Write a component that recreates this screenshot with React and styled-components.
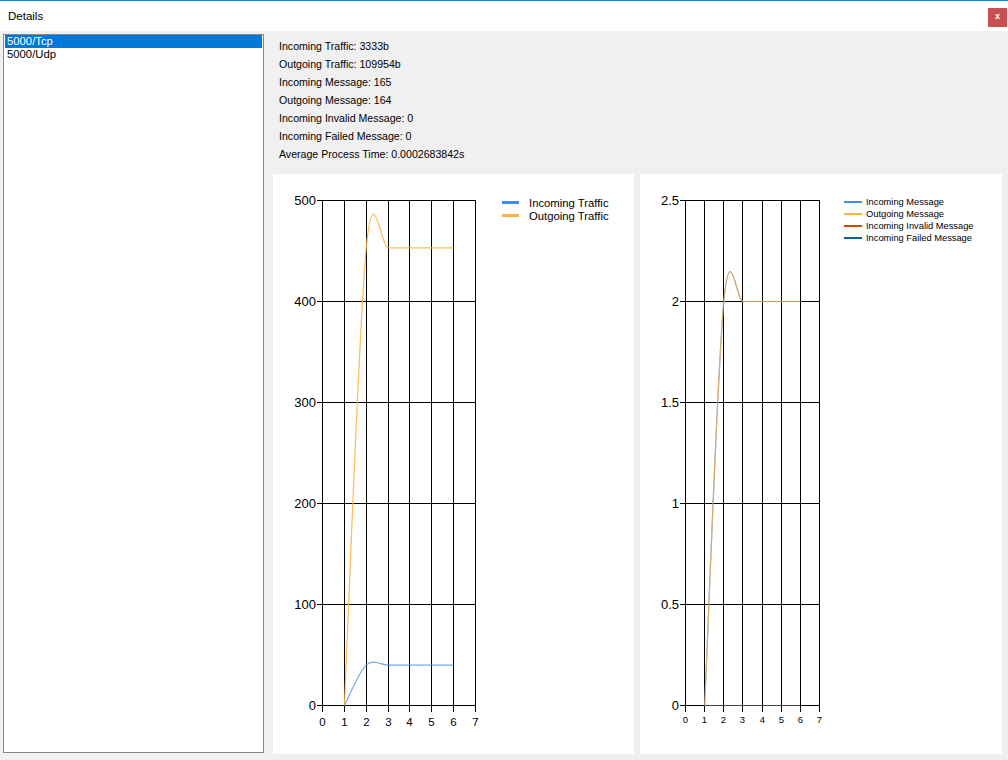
import styled, { createGlobalStyle } from "styled-components";

const GlobalStyle = createGlobalStyle`
  html, body {
    margin: 0;
    padding: 0;
    background: #f0f0f0;
    overflow: hidden;
  }
  body {
    font-family: "Liberation Sans", Arial, sans-serif;
  }
`;

const Window = styled.div`
  width: 1008px;
  height: 760px;
  display: flex;
  flex-direction: column;
  background: #f0f0f0;
`;

const TitleBar = styled.div`
  height: 30px;
  border-top: 1px solid #1883d7;
  background: #fff;
  display: flex;
  justify-content: space-between;
  align-items: center;
  padding: 0 1px 0 8px;
`;

const Title = styled.span`
  font-size: 11.5px;
  color: #000;
`;

const CloseButton = styled.div`
  align-self: flex-start;
  margin-top: 7px;
  width: 19px;
  height: 19px;
  background: #c75050;
  color: #fff;
  font-size: 9px;
  font-weight: bold;
  display: flex;
  align-items: center;
  justify-content: center;
  line-height: 1;
  padding-bottom: 2px;
  box-sizing: border-box;
`;

const Body = styled.div`
  flex: 1;
  display: flex;
  gap: 9px;
  padding: 3px 6px 6px 3px;
  min-height: 0;
`;

const ListBox = styled.div`
  width: 261px;
  height: 719px;
  box-sizing: border-box;
  border: 1px solid #828790;
  background: #fff;
  padding: 0 1px;
  flex-shrink: 0;
`;

const ListItem = styled.div`
  height: 13px;
  line-height: 13px;
  font-size: 11.3px;
  padding-left: 2px;
  background: ${(p) => (p.$selected ? "#0078d7" : "transparent")};
  color: ${(p) => (p.$selected ? "#fff" : "#000")};
`;

const RightColumn = styled.div`
  flex: 1;
  display: flex;
  flex-direction: column;
`;

const Stats = styled.div`
  padding: 3px 0 0 6px;
  margin-bottom: 11px;
  font-size: 10.6px;
  line-height: 18px;
  color: #000;
`;

const ChartsRow = styled.div`
  display: flex;
  gap: 6px;
  height: 580px;
`;

const Panel = styled.div`
  width: ${(p) => p.$width}px;
  background: #fff;
  display: flex;
  align-items: flex-start;
`;

const Legend = styled.div`
  margin-left: 14px;
  padding-top: 22px;
  display: flex;
  flex-direction: column;
`;

const LegendItem = styled.div`
  display: flex;
  align-items: center;
  height: ${(p) => p.$row}px;
  gap: ${(p) => p.$gap}px;
  font-size: ${(p) => p.$font}px;
  color: #000;
  white-space: nowrap;
`;

const Swatch = styled.span`
  width: ${(p) => p.$len}px;
  height: ${(p) => p.$thick}px;
  background: ${(p) => p.$color};
  flex-shrink: 0;
`;

const BLUE = "#418cf0";
const ORANGE = "#fcb441";
const RED = "#e0400a";
const NAVY = "#056492";

// cardinal spline, tension 0.5
function splinePath(pts) {
  if (pts.length < 2) return "";
  const t = 0.5 / 3;
  let d = `M${pts[0][0]},${pts[0][1]}`;
  for (let i = 0; i < pts.length - 1; i++) {
    const p0 = pts[i - 1] || pts[i];
    const p1 = pts[i];
    const p2 = pts[i + 1];
    const p3 = pts[i + 2] || p2;
    const c1 = [p1[0] + (p2[0] - p0[0]) * t, p1[1] + (p2[1] - p0[1]) * t];
    const c2 = [p2[0] - (p3[0] - p1[0]) * t, p2[1] - (p3[1] - p1[1]) * t];
    d += ` C${c1[0]},${c1[1]} ${c2[0]},${c2[1]} ${p2[0]},${p2[1]}`;
  }
  return d;
}

const Chart = ({ width, x0, y0, pw, ph, yLabels, yMax, yFont, xFont, xDy, series }) => {
  const xs = [0, 1, 2, 3, 4, 5, 6, 7].map((i) => Math.round(x0 + (i * pw) / 7) + 0.5);
  const ys = yLabels.map((_, j) => Math.round(y0 + (j * ph) / (yLabels.length - 1)) + 0.5);
  const bottom = ys[ys.length - 1];
  const toPx = (x, v) => [x0 + (x * pw) / 7 + 0.5, y0 + ph - (v / yMax) * ph + 0.5];

  return (
    <svg width={width} height={580}>
      <g stroke="#000" strokeWidth="1" shapeRendering="crispEdges">
        {xs.map((x, i) => (
          <line key={"v" + i} x1={x} y1={ys[0]} x2={x} y2={bottom + 6} />
        ))}
        {ys.map((y, j) => (
          <line key={"h" + j} x1={x0 - 5} y1={y} x2={xs[7]} y2={y} />
        ))}
      </g>
      {series.map((s, k) => (
        <path
          key={k}
          d={splinePath(s.data.map(([x, v]) => toPx(x, v)))}
          fill="none"
          stroke={s.color}
          strokeWidth={s.width || 1.2}
          opacity={s.opacity || 1}
        />
      ))}
      <g fontFamily='"Liberation Sans", Arial, sans-serif' fill="#000">
        {yLabels.map((l, j) => (
          <text key={"yl" + j} x={x0 - 6} y={ys[j]} fontSize={yFont} textAnchor="end" dominantBaseline="central">
            {l}
          </text>
        ))}
        {xs.map((x, i) => (
          <text key={"xl" + i} x={x} y={bottom + xDy} fontSize={xFont} textAnchor="middle" dominantBaseline="central">
            {i}
          </text>
        ))}
      </g>
    </svg>
  );
};

const flat = (v0, v) => [
  [1, v0],
  [2, v],
  [3, v],
  [4, v],
  [5, v],
  [6, v],
];

const stats = [
  "Incoming Traffic: 3333b",
  "Outgoing Traffic: 109954b",
  "Incoming Message: 165",
  "Outgoing Message: 164",
  "Incoming Invalid Message: 0",
  "Incoming Failed Message: 0",
  "Average Process Time: 0.0002683842s",
];

const trafficLegend = [
  { label: "Incoming Traffic", color: BLUE },
  { label: "Outgoing Traffic", color: ORANGE },
];

const messageLegend = [
  { label: "Incoming Message", color: BLUE },
  { label: "Outgoing Message", color: ORANGE },
  { label: "Incoming Invalid Message", color: RED },
  { label: "Incoming Failed Message", color: NAVY },
];

export default function App() {
  return (
    <Window>
      <GlobalStyle />
      <TitleBar>
        <Title>Details</Title>
        <CloseButton>x</CloseButton>
      </TitleBar>
      <Body>
        <ListBox>
          <ListItem $selected>5000/Tcp</ListItem>
          <ListItem>5000/Udp</ListItem>
        </ListBox>
        <RightColumn>
          <Stats>
            {stats.map((s) => (
              <div key={s}>{s}</div>
            ))}
          </Stats>
          <ChartsRow>
            <Panel $width={361}>
              <Chart
                width={215}
                x0={49}
                y0={26}
                pw={153}
                ph={505}
                yLabels={["500", "400", "300", "200", "100", "0"]}
                yMax={500}
                yFont={13}
                xFont={11.5}
                xDy={16}
                series={[
                  { data: flat(0, 40), color: BLUE, opacity: 0.75 },
                  { data: flat(0, 453), color: ORANGE, opacity: 0.9 },
                ]}
              />
              <Legend>
                {trafficLegend.map((l) => (
                  <LegendItem key={l.label} $row={13} $gap={10} $font={11.3}>
                    <Swatch $len={17} $thick={3} $color={l.color} />
                    {l.label}
                  </LegendItem>
                ))}
              </Legend>
            </Panel>
            <Panel $width={362}>
              <Chart
                width={190}
                x0={45}
                y0={26}
                pw={134}
                ph={505}
                yLabels={["2.5", "2", "1.5", "1", "0.5", "0"]}
                yMax={2.5}
                yFont={13}
                xFont={9.5}
                xDy={14}
                series={[
                  { data: flat(0, 0), color: RED, opacity: 0.5 },
                  { data: flat(0, 0), color: NAVY, opacity: 0.5 },
                  { data: flat(0, 2), color: BLUE, opacity: 0.6 },
                  { data: flat(0, 2), color: "#e8a848", opacity: 0.8 },
                ]}
              />
              <Legend>
                {messageLegend.map((l) => (
                  <LegendItem key={l.label} $row={12} $gap={4} $font={9.3}>
                    <Swatch $len={18} $thick={2} $color={l.color} />
                    {l.label}
                  </LegendItem>
                ))}
              </Legend>
            </Panel>
          </ChartsRow>
        </RightColumn>
      </Body>
    </Window>
  );
}
